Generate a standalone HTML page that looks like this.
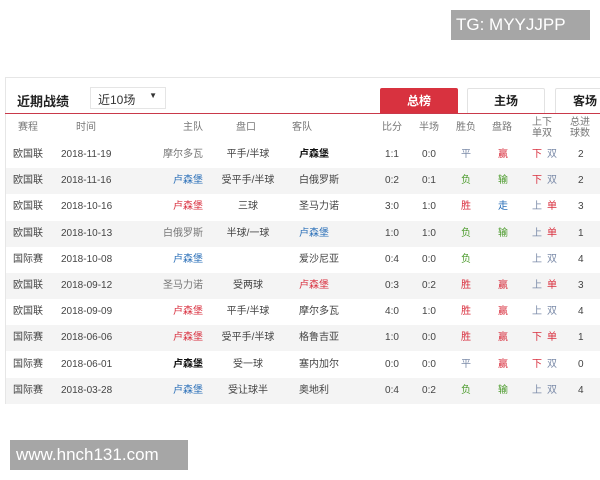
<!DOCTYPE html>
<html><head><meta charset="utf-8"><style>
*{margin:0;padding:0;box-sizing:border-box}
body{width:600px;height:480px;background:#fff;position:relative;overflow:hidden;font-family:"Liberation Sans","Noto Sans CJK SC",sans-serif;font-size:10px;color:#444}
.panel{position:absolute;left:5px;top:77px;width:600px;height:327px;border:1px solid #e6e6e6;background:#fff}
.title{position:absolute;left:17px;top:91px;font-size:13px;font-weight:bold;color:#222}
.sel{position:absolute;left:90px;top:87px;width:76px;height:22px;border:1px solid #e5e5e5;font-size:12px;color:#333;padding:3px 0 0 7px}
.sel span{position:absolute;right:8px;top:3px;font-size:8px}
.tab{position:absolute;top:88px;height:25px;border:1px solid #e2e2e2;border-bottom:none;text-align:center;font-size:12px;font-weight:bold;line-height:25px;color:#222;background:#fff;border-radius:2px 2px 0 0}
.red{position:absolute;left:5px;top:113px;width:595px;height:1px;background:#c9394a}
.row{position:absolute;left:6px;width:594px;height:26px}
.g{background:#f4f4f4}
.c{position:absolute;top:0;line-height:26px;white-space:nowrap}
.hd .c{color:#777}
.b{font-weight:bold;color:#111}.bl{color:#2a6fb8}.rd{color:#d9303f}.gn{color:#4a9a2a}.gy{color:#777}.pb{color:#7a8aa8}
.wm{position:absolute;background:#a6a6a6;color:#fff;font-size:17px;line-height:30px}
</style></head><body>
<div class="wm" style="left:451px;top:10px;width:139px;height:30px;padding-left:5px">TG: MYYJJPP</div>
<div class="panel"></div>
<div class="title">近期战绩</div>
<div class="sel">近10场<span>▼</span></div>
<div class="tab" style="left:380px;width:78px;background:#d8323f;border-color:#d8323f;color:#fff">总榜</div>
<div class="tab" style="left:467px;width:78px">主场</div>
<div class="tab" style="left:555px;width:60px">客场</div>
<div class="red"></div>
<div class="row hd" style="top:114px;height:28px">
<div class="c" style="left:12px;line-height:28px">赛程</div><div class="c" style="left:70px;line-height:28px">时间</div>
<div class="c" style="left:177px;line-height:28px">主队</div><div class="c" style="left:230px;line-height:28px">盘口</div>
<div class="c" style="left:286px;line-height:28px">客队</div><div class="c" style="left:376px;line-height:28px">比分</div>
<div class="c" style="left:413px;line-height:28px">半场</div><div class="c" style="left:450px;line-height:28px">胜负</div>
<div class="c" style="left:486px;line-height:28px">盘路</div>
<div class="c" style="left:526px;top:3px;line-height:11px;text-align:center">上下<br>单双</div>
<div class="c" style="left:564px;top:3px;line-height:11px;text-align:center">总进<br>球数</div>
</div>
<div id="rows"></div>
<script>
var d=[
["欧国联","2018-11-19","摩尔多瓦","gy","平手/半球","卢森堡","b","1:1","0:0","平","pb","赢","rd","下","rd","双","pb","2"],
["欧国联","2018-11-16","卢森堡","bl","受平手/半球","白俄罗斯","","0:2","0:1","负","gn","输","gn","下","rd","双","pb","2"],
["欧国联","2018-10-16","卢森堡","rd","三球","圣马力诺","","3:0","1:0","胜","rd","走","bl","上","pb","单","rd","3"],
["欧国联","2018-10-13","白俄罗斯","gy","半球/一球","卢森堡","bl","1:0","1:0","负","gn","输","gn","上","pb","单","rd","1"],
["国际赛","2018-10-08","卢森堡","bl","","爱沙尼亚","","0:4","0:0","负","gn","","","上","pb","双","pb","4"],
["欧国联","2018-09-12","圣马力诺","gy","受两球","卢森堡","rd","0:3","0:2","胜","rd","赢","rd","上","pb","单","rd","3"],
["欧国联","2018-09-09","卢森堡","rd","平手/半球","摩尔多瓦","","4:0","1:0","胜","rd","赢","rd","上","pb","双","pb","4"],
["国际赛","2018-06-06","卢森堡","rd","受平手/半球","格鲁吉亚","","1:0","0:0","胜","rd","赢","rd","下","rd","单","rd","1"],
["国际赛","2018-06-01","卢森堡","b","受一球","塞内加尔","","0:0","0:0","平","pb","赢","rd","下","rd","双","pb","0"],
["国际赛","2018-03-28","卢森堡","bl","受让球半","奥地利","","0:4","0:2","负","gn","输","gn","上","pb","双","pb","4"]];
var h="";
d.forEach(function(r,i){
h+='<div class="row'+(i%2?' g':'')+'" style="top:'+(142+i*26.2)+'px">'+
'<div class="c" style="left:7px">'+r[0]+'</div><div class="c" style="left:55px">'+r[1]+'</div>'+
'<div class="c '+r[3]+'" style="right:397px">'+r[2]+'</div>'+
'<div class="c" style="left:242px;transform:translateX(-50%)">'+r[4]+'</div>'+
'<div class="c '+r[6]+'" style="left:293px">'+r[5]+'</div>'+
'<div class="c" style="left:386px;transform:translateX(-50%)">'+r[7]+'</div>'+
'<div class="c" style="left:423px;transform:translateX(-50%)">'+r[8]+'</div>'+
'<div class="c '+r[10]+'" style="left:455px">'+r[9]+'</div>'+
'<div class="c '+r[12]+'" style="left:492px">'+r[11]+'</div>'+
'<div class="c '+r[14]+'" style="left:526px">'+r[13]+'</div>'+
'<div class="c '+r[16]+'" style="left:541px">'+r[15]+'</div>'+
'<div class="c" style="left:572px">'+r[17]+'</div></div>';});
document.getElementById("rows").innerHTML=h;
</script>
<div class="wm" style="left:10px;top:440px;width:178px;height:30px;padding-left:6px">www.hnch131.com</div>
</body></html>
